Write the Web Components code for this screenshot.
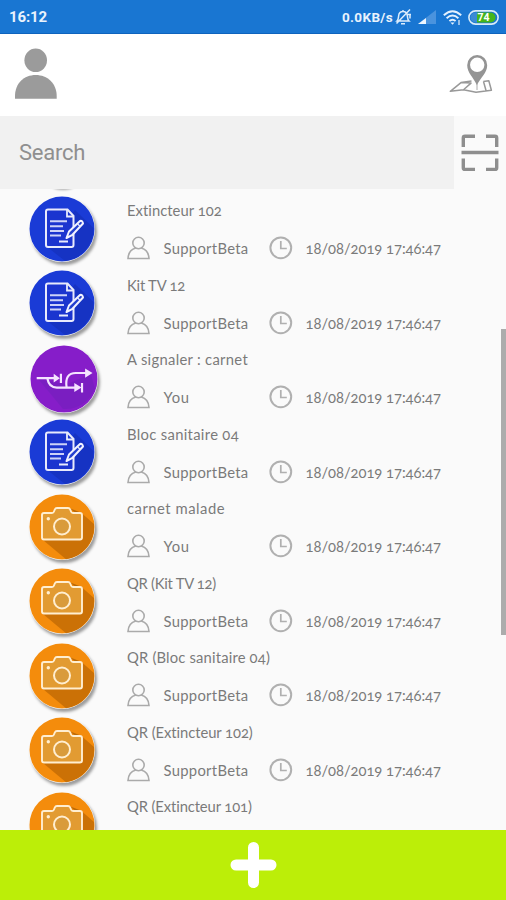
<!DOCTYPE html>
<html lang="en">
<head>
<meta charset="utf-8">
<title>Records</title>
<style>
html,body{margin:0;height:100%;overflow:hidden;background:#fafafa}
body{font-family:Lato,"Liberation Sans",sans-serif;color:#757575}
</style>
</head>
<body>
<app-screen></app-screen>
<script>
function define(name, html, setup) {
  customElements.define(name, class extends HTMLElement {
    constructor() {
      super();
      this.attachShadow({ mode: 'open' }).innerHTML = html;
    }
    connectedCallback() { if (setup) setup(this, this.shadowRoot); }
  });
}

/* One line of text spaced out to a given advance width. */
define('fit-text', `<style>:host{display:block;white-space:nowrap;line-height:20px}span{display:inline-block}</style><span><slot></slot></span>`,
  el => {
    const n = el.textContent.length;
    const w = el.shadowRoot.querySelector('span').getBoundingClientRect().width;
    el.style.letterSpacing = ((+el.getAttribute('width') - w) / n) + 'px';
  });

define('status-bar', `<style>
:host{display:flex;box-sizing:border-box;height:34px;padding:1px 7px 0 9px;align-items:center;background:#1976d2;border-bottom:1px solid #0e63bd;color:#e9f3fd;font:700 14px Roboto,sans-serif}
.time{flex:1;font-size:15px}.rate{font-size:13.5px}svg{display:block}
.bell{margin-left:2px}.signal{margin-left:6px}.wifi{margin-left:7px}.battery{margin-left:6px}
</style>
<fit-text class="time" width="38">16:12</fit-text>
<fit-text class="rate" width="51">0.0KB/s</fit-text>
<svg class="bell" width="17" height="18" viewBox="0 0 17 18" fill="none" stroke="#dcecfb" stroke-width="1.500"><path d="M2 13c1.500-1.400 1.400-3 1.600-5C3.900 5 5.500 3.600 8 3.600s4.100 1.400 4.400 4.400c.2 2 .1 3.600 1.600 5zM6 15.700h4M15 1.500 1.500 15.500M8 3.600V2M12.500 6.500H16M15 6.500v4"/></svg>
<svg class="signal" width="18" height="14" viewBox="0 0 18 14"><path d="M18 0v14H0z" fill="#4a93de"/><path d="M8 8v6H0z" fill="#edf6ff"/></svg>
<svg class="wifi" width="19" height="15" viewBox="0 0 19 15" fill="none" stroke="#e4f1fd" stroke-width="1.900"><path d="M.8 5.200Q9.500-2.800 18.200 5.200M3.600 8.200q5.900-5.200 11.800 0M6.400 11.100q3.100-2.600 6.200 0"/><path d="m7.500 12.500 2 2.300 2-2.300z" fill="#e4f1fd" stroke="none"/><path d="M16 10v5" stroke-width="1.200"/></svg>
<svg class="battery" width="31" height="15" viewBox="0 0 31 15"><rect x=".9" y=".9" width="29.200" height="13.200" rx="6.600" fill="#1976d2" stroke="#d9ebf8" stroke-width="1.600"/><path d="M9 2.500h13.500a5 5 0 0 1 5 5 5 5 0 0 1-5 5H9z" fill="#45b51c"/><path d="M9 2.500H7.500a5 5 0 0 0 0 10H9z" fill="#3b8bd4"/><text x="15.500" y="11.300" text-anchor="middle" fill="#fff" font-size="10.500" font-family="Roboto,sans-serif" font-weight="700">74</text></svg>`);

define('app-header', `<style>
:host{display:flex;box-sizing:border-box;height:82px;padding:14px 12px 0 14px;justify-content:space-between;background:#fff}svg{display:block}
</style>
<svg width="44" height="52" viewBox="0 0 44 52" fill="#9b9b9b"><ellipse cx="21.700" cy="12.300" rx="11.300" ry="11.800"/><path d="M1 50.800V48C1 35.500 10 27 21.700 27s21 8.500 21 21v2.800z"/></svg>
<svg width="46" height="50" viewBox="0 0 46 50"><path d="M23.500 33 13 34.600 2.300 43.300l13.200-1.600 12.500 2.500 15.400-1.900-2.600-9.600-5.500.700M13 34.600l10 .500-7.500 6.600M35.500 33.500l2.500 9" fill="none" stroke="#999" stroke-width="1.500" stroke-linejoin="round"/><path d="M29.200 7a10 10 0 0 0-10 10.200c0 7.500 6.500 12.500 9.700 20 3.600-7.500 10.300-12.500 10.300-20A10 10 0 0 0 29.200 7z" fill="#949494"/><path d="M29 36v6" stroke="#aaa"/><circle cx="29.200" cy="16.800" r="7.200" fill="#fff"/></svg>`);

define('search-bar', `<style>
:host{display:flex;height:73px;background:#fafafa}
.field{width:454px;box-sizing:border-box;padding:0 19px;display:flex;align-items:center;background:#f1f1f1;color:#8f8f8f;font:400 22px Roboto,sans-serif}
fit-text{line-height:28px}
.scan{flex:1;display:flex;align-items:center;justify-content:center}
</style>
<div class="field"><fit-text width="66">Search</fit-text></div>
<div class="scan"><svg width="40" height="40" viewBox="0 0 40 40" fill="none" stroke="#8e8e8e" stroke-width="3.400"><path d="M3.300 14V5q0-1.700 1.700-1.700h10M26 3.300h9q1.700 0 1.700 1.700v9M3.300 25.500v9.200q0 1.700 1.700 1.700h10M26 36.400h9q1.700 0 1.700-1.700v-9.200M1.500 19.500h37"/></svg></div>`);

const ART = {
  note: `<circle cx="33" cy="33" r="32.500" fill="#1a3bd6"/><path d="M46 14 64.500 32A32.500 32.500 0 0 1 36 65L17 50z" fill="#122bb0" opacity=".5"/>
<path d="M19 13.500h19.500l6 6.500v29q0 2-2 2H19q-2 0-2-2V15.500q0-2 2-2z" fill="#1b34cf" stroke="#e8eafc" stroke-width="2"/><path d="M38 13.700v6.800h6.500" fill="none" stroke="#e8eafc" stroke-width="1.800"/>
<path d="M21 25.300h17M21 30.300h13M21 35h14M21 39.500h11" stroke="#cdd2f8" stroke-width="2.100"/><path d="M30 45.500h9" stroke="#e8eafc" stroke-width="2"/>
<path d="m37.500 42 2.500-6.500 11-10.500q2.500-.7 3 2.500L43 39.200z" fill="#2340cf" stroke="#f1f2ff" stroke-width="2" stroke-linejoin="round"/><path d="m48.500 27.800 3 3" stroke="#e8eafc" stroke-width="1.300"/>`,
  photo: `<circle cx="33" cy="33" r="32.500" fill="#f48c0c"/><path d="M53 19.500 65 30A32.500 32.500 0 0 1 37 65.200L14 46z" fill="#c76e05" opacity=".9"/><path d="m40 14 7 5h6z" fill="#b8680a"/>
<path d="M15 19h8q1.500 0 2-1.500l.8-2q.6-1.500 2.200-1.500h11q1.600 0 2.200 1.500l.8 2q.5 1.500 2 1.500h7q2 0 2 2v22.500q0 2-2 2H15q-2 0-2-2V21q0-2 2-2z" fill="#e29b32" stroke="#ffeed0" stroke-width="1.900"/>
<circle cx="33" cy="32.500" r="8" fill="#d99b3b" stroke="#ffeed0" stroke-width="2"/><circle cx="19.300" cy="24.800" r="1.700" fill="#ffeed0"/>`,
  flow: `<circle cx="33" cy="33" r="32.500" fill="#861dc9"/><path d="m8 33 24 29a30 30 0 0 0 31-20l-4-14-23 10z" fill="#731fbd" opacity=".6"/>
<g fill="none" stroke="#f4e3ff" stroke-width="2.100"><path d="M6.500 32.200h19M30 28v9M17 33q1.500 8.300 9 8.300h20M50.500 37v9M35.500 41q-2-13.800 9-13.800h12"/></g><path d="m23 28 6 4.200-6 4.200zM43 37l7 4.300-7 4.300zM53.500 22.700l7.200 4.500-7.200 4.500z" fill="#f4e3ff"/>`
};

define('kind-badge', `<style>
:host{display:block;width:66px;height:66px;border-radius:50%;box-shadow:2px 3px 3px rgba(0,0,0,.38)}
:host([kind=flow]){width:68px;height:68px;margin-right:-2px;margin-left:1px}
svg{display:block;width:100%;height:100%}</style><svg viewBox="0 0 66 66"></svg>`,
  (el, root) => { root.querySelector('svg').innerHTML = ART[el.getAttribute('kind')]; });

define('record-row', `<style>
:host{display:grid;grid-template-columns:66px 1fr;column-gap:32px;height:74.5px;padding-left:29px;box-sizing:border-box}
.badge{padding-top:3.500px}
.body{padding-top:8px;font-size:14.800px;color:#7a7a7a;font-variant-numeric:oldstyle-nums}
.meta{display:grid;grid-template-columns:36.500px 105px 37px 1fr;align-items:center;height:24px;margin-top:16px}
svg{display:block}
</style>
<div class="badge"></div>
<div class="body"><div class="title"></div>
<div class="meta">
<svg width="24" height="24" viewBox="0 0 24 24" fill="none" stroke="#aaa" stroke-width="1.600"><circle cx="11.500" cy="7" r="5.700"/><path d="M8.800 12.100Q1.500 14 1 22.500H22Q21.500 14 14.200 12.100"/></svg>
<div class="user"></div>
<svg width="24" height="24" viewBox="0 0 24 24" fill="none" stroke="#b0b0b0" stroke-width="2"><circle cx="11.800" cy="11.800" r="10.400"/><path d="M11.800 5v7.500h6" stroke-width="1.700"/></svg>
<fit-text width="135.500">18/08/2019 17:46:47</fit-text>
</div></div>`,
  (el, root) => {
    const user = el.getAttribute('user');
    root.querySelector('.badge').innerHTML = `<kind-badge kind="${el.getAttribute('kind')}"></kind-badge>`;
    root.querySelector('.title').innerHTML = `<fit-text width="${el.getAttribute('w')}">${el.getAttribute('label')}</fit-text>`;
    if (!user) { root.querySelector('.meta').remove(); return; }
    root.querySelector('.user').innerHTML = `<fit-text width="${user === 'You' ? 26 : 85}">${user}</fit-text>`;
  });

const ROWS = [
  ['note', 'Extincteur 102', 'SupportBeta', 95],
  ['note', 'Kit TV 12', 'SupportBeta', 58],
  ['flow', 'A signaler : carnet', 'You', 121],
  ['note', 'Bloc sanitaire 04', 'SupportBeta', 112],
  ['photo', 'carnet malade', 'You', 98],
  ['photo', 'QR (Kit TV 12)', 'SupportBeta', 89],
  ['photo', 'QR (Bloc sanitaire 04)', 'SupportBeta', 143],
  ['photo', 'QR (Extincteur 102)', 'SupportBeta', 126],
  ['photo', 'QR (Extincteur 101)', '', 125]
];

define('record-list', `<style>
:host{display:block;flex:1;min-height:0;overflow:hidden;position:relative;background:#fafafa}
.rows{padding-top:3px}
.edge{position:absolute;top:-5px;left:53px;width:20px;height:6px;border-radius:50%;background:#aaa;filter:blur(1px)}
.thumb{position:absolute;right:0;top:140px;width:5px;height:306px;background:#acacac}
</style><div class="edge"></div><div class="rows"></div><div class="thumb"></div>`,
  (el, root) => {
    root.querySelector('.rows').innerHTML = ROWS.map(([k, t, u, w]) =>
      `<record-row kind="${k}" label="${t}" user="${u}" w="${w}"></record-row>`).join('');
  });

define('add-bar', `<style>:host{display:flex;height:70px;align-items:center;justify-content:center;background:#bcee08}svg{display:block}</style>
<svg width="47" height="48" viewBox="0 0 47 48" stroke="#fff" stroke-width="11" stroke-linecap="round"><path d="M23.500 6.500v35M6 24h35"/></svg>`);

define('app-screen', `<style>:host{display:flex;flex-direction:column;width:506px;height:900px;overflow:hidden}</style>
<status-bar></status-bar><app-header></app-header><search-bar></search-bar><record-list></record-list><add-bar></add-bar>`);
</script>
</body>
</html>
